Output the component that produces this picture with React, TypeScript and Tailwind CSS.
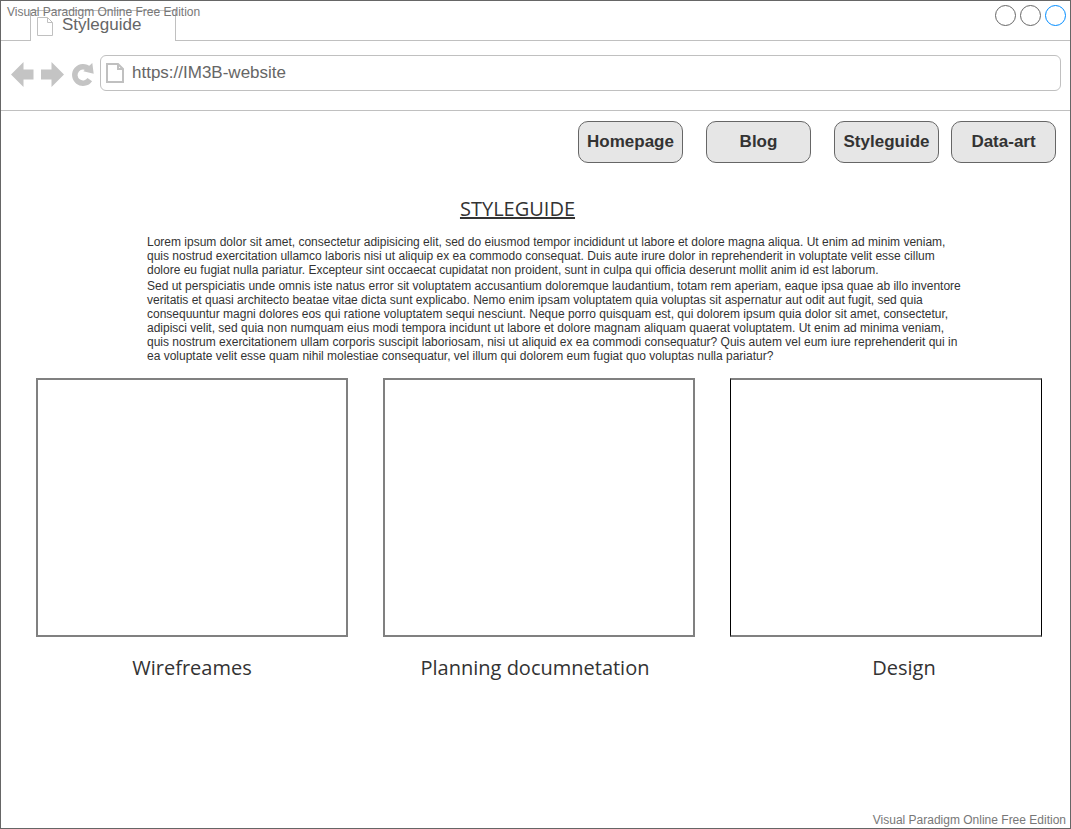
import React from "react";

const navItems = ["Homepage", "Blog", "Styleguide"];

const cards = [
  { title: "Wirefreames", frame: "border-2 border-[#808080]", caption: "" },
  { title: "Planning documnetation", frame: "border-2 border-[#808080]", caption: "pr-2" },
  {
    title: "Design",
    frame: "border-x border-y-2 border-x-black border-y-[#808080]",
    caption: "pl-9",
  },
];

const navButton =
  "h-[42px] w-[105px] rounded-[10px] border border-[#666666] bg-[#e6e6e6] pb-px text-center text-[17px] font-bold text-[#333333]";

function PageIcon({ className, stroke }: { className: string; stroke: number }) {
  return (
    <svg viewBox="0 0 18 20" className={className} fill="none" stroke="#c0c0c0" strokeWidth={stroke} aria-hidden="true">
      <path d="M1 1H12L17 6V19H1Z" />
      <path d="M12 1V6H17" />
    </svg>
  );
}

function Browser({ children }: { children: React.ReactNode }) {
  return (
    <div className="relative flex min-h-screen flex-col border border-[#666666] bg-white font-['Liberation_Sans',Arial,sans-serif]">
      <span className="absolute top-1 left-[6px] text-[12px] leading-[14px] text-[#777777]">
        Visual Paradigm Online Free Edition
      </span>
      <header className="border-b border-[#c0c0c0]">
        <div className="flex h-10 items-end">
          <div className="w-[29px] self-stretch border-b border-[#c0c0c0]" />
          <div className="flex h-[31px] w-[146px] items-start border-x border-t border-[#c0c0c0] pt-[6px] pl-[6px]">
            <svg viewBox="0 0 16 19" className="h-[19px] w-4" fill="none" stroke="#c0c0c0" aria-hidden="true">
              <path d="M.5 .5H10.5L15.5 5.5V18.5H.5Z" />
              <path d="M10.5 .5V5.5H15.5" />
            </svg>
            <span className="-mt-[2px] pl-[9px] text-[17px] leading-5 text-[#666666]">Styleguide</span>
          </div>
          <div className="flex flex-1 justify-end gap-1 self-stretch border-b border-[#c0c0c0] pt-1 pr-1">
            <button aria-label="Minimize" className="size-[21px] rounded-full border border-[#666666]" />
            <button aria-label="Maximize" className="size-[21px] rounded-full border border-[#666666]" />
            <button aria-label="Close" className="size-[21px] rounded-full border border-[#008cff]" />
          </div>
        </div>
        <div className="flex h-[69px] items-start pt-[14px] pr-[9px] pl-[10px]">
          <div className="flex gap-[7px] pt-[6px] pr-[6px]">
            <button aria-label="Back">
              <svg viewBox="0 0 23 26" className="h-[26px] w-[23px]" fill="#c4c4c4">
                <path d="M0 13.5 12.5 1V8.5H22.5V18.5H12.5V26Z" />
              </svg>
            </button>
            <button aria-label="Forward">
              <svg viewBox="0 0 23 26" className="h-[26px] w-[23px]" fill="#c4c4c4">
                <path d="M23 13.5 10.5 1V8.5H0V18.5H10.5V26Z" />
              </svg>
            </button>
            <button aria-label="Reload">
              <svg viewBox="0 0 23 26" className="h-[26px] w-[23px]">
                <path d="M18.8 18.6A8.2 8.2 0 1 1 17.8 8.2" fill="none" stroke="#c4c4c4" strokeWidth="5.5" />
                <path d="M21.3 2 22.7 12.7 12.3 10.3Z" fill="#c4c4c4" />
              </svg>
            </button>
          </div>
          <label className="flex h-9 flex-1 items-center gap-2 rounded-[6px] border border-[#c0c0c0] pl-[5px]">
            <PageIcon className="h-5 w-[18px]" stroke={2} />
            <input
              aria-label="Address"
              defaultValue="https://IM3B-website"
              className="min-w-0 flex-1 text-[17px] leading-5 text-[#666666] outline-none"
            />
          </label>
        </div>
      </header>
      {children}
      <footer className="mt-auto pr-1 pb-px text-right text-[12px] leading-[14px] text-[#777777]">
        Visual Paradigm Online Free Edition
      </footer>
    </div>
  );
}

export default function App() {
  return (
    <Browser>
      <nav className="flex justify-end gap-3 pt-[10px] pr-[14px]">
        <div className="flex gap-[23px]">
          {navItems.map((item) => (
            <button key={item} className={navButton}>
              {item}
            </button>
          ))}
        </div>
        <button className={navButton}>Data-art</button>
      </nav>
      <main className="text-[#333333]">
        <h1 className="pt-8 pr-9 text-center font-['Open_Sans',sans-serif] text-[20px] leading-7 font-normal underline">
          STYLEGUIDE
        </h1>
        <div className="flex flex-col gap-[2px] pt-3 pr-[104px] pl-[146px] text-[12px] leading-[14px]">
          <p>
            Lorem ipsum dolor sit amet, consectetur adipisicing elit, sed do eiusmod tempor incididunt ut labore et
            dolore magna aliqua. Ut enim ad minim veniam, quis nostrud exercitation ullamco laboris nisi ut aliquip ex
            ea commodo consequat. Duis aute irure dolor in reprehenderit in voluptate velit esse cillum dolore eu
            fugiat nulla pariatur. Excepteur sint occaecat cupidatat non proident, sunt in culpa qui officia deserunt
            mollit anim id est laborum.
          </p>
          <p>
            Sed ut perspiciatis unde omnis iste natus error sit voluptatem accusantium doloremque laudantium, totam rem
            aperiam, eaque ipsa quae ab illo inventore veritatis et quasi architecto beatae vitae dicta sunt explicabo.
            Nemo enim ipsam voluptatem quia voluptas sit aspernatur aut odit aut fugit, sed quia consequuntur magni
            dolores eos qui ratione voluptatem sequi nesciunt. Neque porro quisquam est, qui dolorem ipsum quia dolor
            sit amet, consectetur, adipisci velit, sed quia non numquam eius modi tempora incidunt ut labore et dolore
            magnam aliquam quaerat voluptatem. Ut enim ad minima veniam, quis nostrum exercitationem ullam corporis
            suscipit laboriosam, nisi ut aliquid ex ea commodi consequatur? Quis autem vel eum iure reprehenderit qui in
            ea voluptate velit esse quam nihil molestiae consequatur, vel illum qui dolorem eum fugiat quo voluptas
            nulla pariatur?
          </p>
        </div>
        <div className="grid grid-cols-3 gap-[35px] pt-[15px] pr-7 pl-[35px]">
          {cards.map((card) => (
            <figure key={card.title}>
              <div className={`h-[259px] ${card.frame}`} />
              <figcaption
                className={`pt-[17px] text-center font-['Open_Sans',sans-serif] text-[20px] leading-7 font-normal ${card.caption}`}
              >
                {card.title}
              </figcaption>
            </figure>
          ))}
        </div>
      </main>
    </Browser>
  );
}
